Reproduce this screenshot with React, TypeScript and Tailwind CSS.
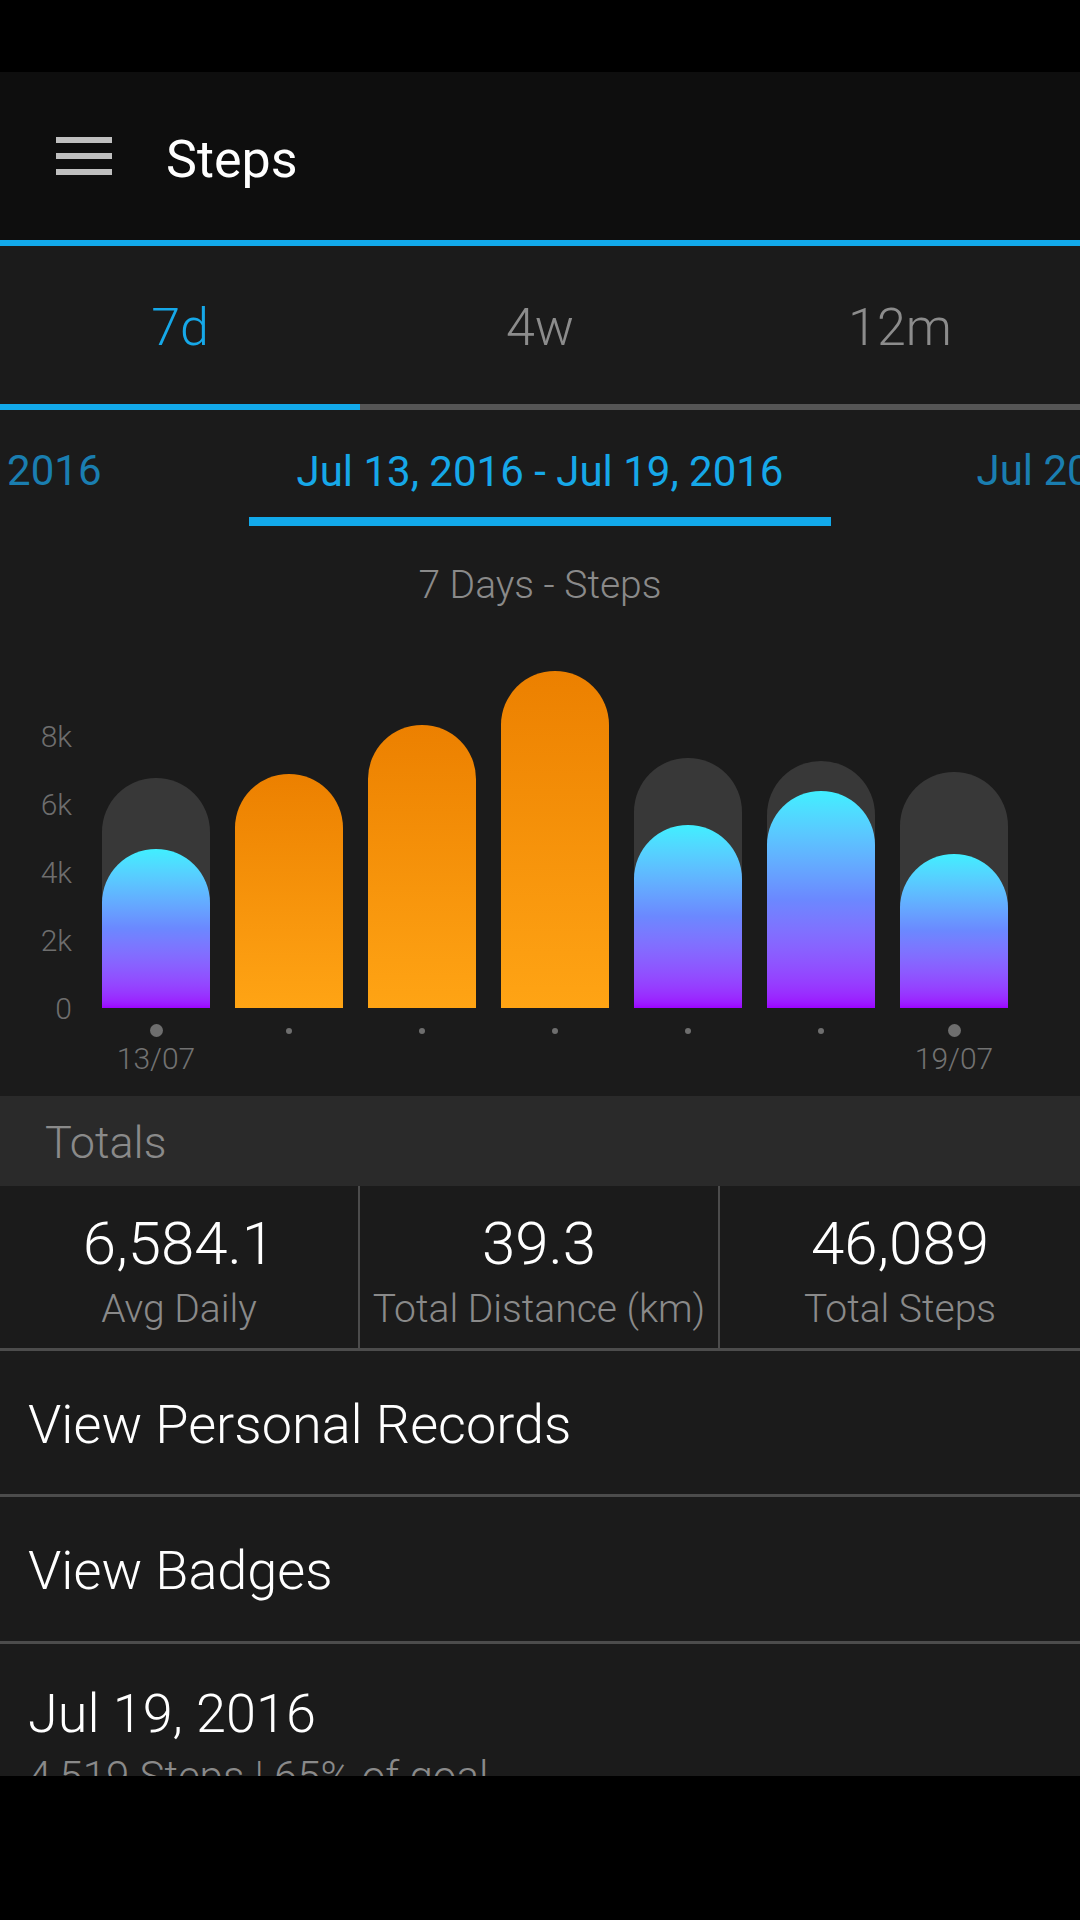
import clsx from "clsx";

interface Day {
  label: string;
  steps: number;
  goal: number;
}

// 1 step = 0.034px (2k per 68px on the axis)
const PX_PER_STEP = 0.034;

const days: Day[] = [
  { label: "13/07", steps: 4676, goal: 6765 },
  { label: "", steps: 6882, goal: 6800 },
  { label: "", steps: 8324, goal: 7000 },
  { label: "", steps: 9924, goal: 7200 },
  { label: "", steps: 5382, goal: 7353 },
  { label: "", steps: 6382, goal: 7265 },
  { label: "19/07", steps: 4519, goal: 6952 },
];

const axis = ["8k", "6k", "4k", "2k", "0"];

const tabs = ["7d", "4w", "12m"];

function Bar({ steps, goal }: { steps: number; goal: number }) {
  const h = Math.round(steps * PX_PER_STEP);
  const gh = Math.round(goal * PX_PER_STEP);
  const hit = steps >= goal;
  return (
    <div className="relative w-[108px]" style={{ height: Math.max(h, gh) }}>
      {!hit && <div className="absolute inset-0 rounded-t-full bg-[#383838]" />}
      <div
        className={clsx(
          "absolute inset-x-0 bottom-0 rounded-t-full bg-linear-to-b",
          hit ? "from-[#ec8000] to-[#ffa414]" : "from-[#40efff] via-[#6b88ff] to-[#9d00ff]"
        )}
        style={{ height: h }}
      />
    </div>
  );
}

export default function App() {
  return (
    <div className="flex h-[1920px] w-[1080px] flex-col bg-black font-['Roboto','Liberation_Sans',sans-serif]">
      {/* status bar */}
      <div className="h-[72px] shrink-0 bg-black" />

      {/* toolbar */}
      <div className="flex h-[168px] shrink-0 items-center bg-[#0e0e0e]">
        <div className="ml-[56px] flex w-[56px] flex-col gap-[10px]">
          <span className="h-[6px] bg-[#bfbfbf]" />
          <span className="h-[6px] bg-[#bfbfbf]" />
          <span className="h-[6px] bg-[#bfbfbf]" />
        </div>
        <h1 className="ml-[54px] pt-[7px] text-[52px] leading-none text-white">Steps</h1>
      </div>
      <div className="h-[6px] shrink-0 bg-[#12a9ea]" />

      <div className="flex flex-1 flex-col overflow-hidden bg-[#1b1b1b]">
        {/* range tabs */}
        <div className="grid h-[158px] shrink-0 grid-cols-3 items-center pt-[6px] text-center text-[52px] font-light leading-none">
          {tabs.map((t, i) => (
            <span key={t} className={i === 0 ? "text-[#16a8e8]" : "text-[#8c8c8c]"}>
              {t}
            </span>
          ))}
        </div>
        <div className="flex h-[6px] shrink-0">
          <div className="w-1/3 bg-[#12a9ea]" />
          <div className="flex-1 bg-[#555555]" />
        </div>

        {/* week pager + chart */}
        <div className="flex shrink-0 flex-col pt-[40px] pb-[22px]">
          <div className="grid grid-cols-[minmax(0,1fr)_auto_minmax(0,1fr)] gap-x-[145px] text-[42px] leading-none">
            <div className="flex justify-end overflow-hidden pr-[2px]">
              <span className="shrink-0 whitespace-nowrap text-[#1a7eb0]">Jul 6, 2016 - Jul 12, 2016</span>
            </div>
            <div className="flex flex-col">
              <span className="whitespace-nowrap px-[48px] pt-[1px] text-[#16a8e8]">Jul 13, 2016 - Jul 19, 2016</span>
              <span className="mt-[24px] h-[9px] bg-[#12a9ea]" />
            </div>
            <div className="flex overflow-hidden">
              <span className="shrink-0 whitespace-nowrap text-[#1a7eb0]">Jul 20, 2016 - Jul 26, 2016</span>
            </div>
          </div>

          <p className="mt-[40px] text-center text-[39px] font-light leading-none text-[#8a8a8a]">7 Days - Steps</p>

          <div className="flex h-[403px] items-end">
            <div className="flex h-[302px] w-[72px] translate-y-[16px] flex-col items-end justify-between text-[30px] font-light leading-none text-[#6e6e6e]">
              {axis.map((a) => (
                <span key={a}>{a}</span>
              ))}
            </div>
            <div className="ml-[30px] flex items-end gap-[25px]">
              {days.map((d, i) => (
                <Bar key={i} steps={d.steps} goal={d.goal} />
              ))}
            </div>
          </div>

          <div className="ml-[102px] mt-[16px] flex h-[13px] items-center gap-[25px]">
            {days.map((d, i) => (
              <div key={i} className="flex w-[108px] justify-center">
                <span
                  className={clsx(
                    "rounded-full bg-[#6e6e6e]",
                    d.label ? "h-[13px] w-[13px]" : "h-[6px] w-[6px]"
                  )}
                />
              </div>
            ))}
          </div>
          <div className="ml-[102px] mt-[7px] flex gap-[25px] text-[30px] font-light leading-none text-[#727272]">
            {days.map((d, i) => (
              <span key={i} className="h-[30px] w-[108px] text-center">
                {d.label}
              </span>
            ))}
          </div>
        </div>

        {/* totals */}
        <div className="flex h-[90px] shrink-0 items-center bg-[#2a2a2a] pl-[45px] pt-[2px] text-[45px] font-light leading-none text-[#8a8a8a]">
          Totals
        </div>
        <div className="grid shrink-0 grid-cols-3 divide-x-2 divide-[#4c4c4c] border-b-[3px] border-[#4c4c4c]">
          {[
            ["6,584.1", "Avg Daily"],
            ["39.3", "Total Distance (km)"],
            ["46,089", "Total Steps"],
          ].map(([v, l]) => (
            <div key={l} className="flex h-[162px] flex-col items-center pt-[28px]">
              <span className="text-[60px] font-light leading-none text-white">{v}</span>
              <span className="mt-[16px] whitespace-nowrap text-[39px] font-light leading-none text-[#8a8a8a]">{l}</span>
            </div>
          ))}
        </div>

        <div className="flex h-[146px] shrink-0 items-center border-b-[3px] border-[#4c4c4c] pl-[28px] pt-[4px] text-[54px] font-light leading-none text-white">
          View Personal Records
        </div>
        <div className="flex h-[147px] shrink-0 items-center border-b-[3px] border-[#4c4c4c] pl-[28px] pt-[4px] text-[54px] font-light leading-none text-white">
          View Badges
        </div>
        <div className="flex flex-col pl-[28px] pt-[43px]">
          <span className="text-[54px] font-light leading-none text-white">Jul 19, 2016</span>
          <span className="mt-[15px] text-[42px] font-light leading-none text-[#8a8a8a]">4,519 Steps | 65% of goal</span>
        </div>
      </div>

      {/* navigation bar */}
      <div className="h-[144px] shrink-0 bg-black" />
    </div>
  );
}
